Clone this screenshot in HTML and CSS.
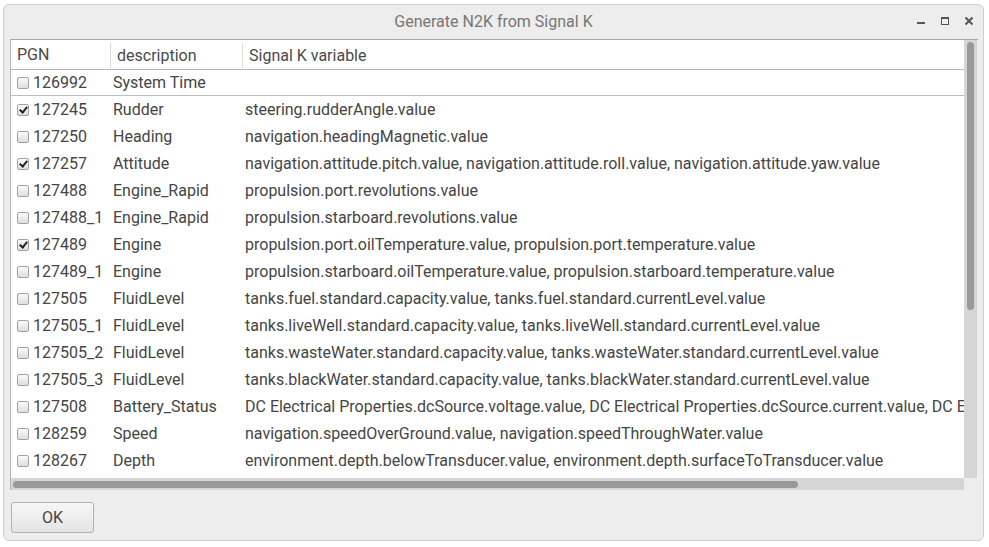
FILE: index.html
```html
<!DOCTYPE html>
<html>
<head>
<meta charset="utf-8">
<link rel="stylesheet" href="styles.css">
</head>
<body>
<div class="window">
  <div class="titlebar">
    <div></div>
    <div class="title">Generate N2K from Signal K</div>
    <div class="controls">
      <svg class="ctl" width="10" height="10" viewBox="0 0 10 10"><rect x="1" y="6" width="8" height="2" fill="#555"/></svg>
      <svg class="ctl" width="10" height="10" viewBox="0 0 10 10"><rect x="1.5" y="1.5" width="7" height="7" fill="none" stroke="#555" stroke-width="1"/><rect x="1" y="1" width="8" height="2" fill="#555"/></svg>
      <svg class="ctl" width="10" height="10" viewBox="0 0 10 10"><path d="M1.5 1.5 L8.5 8.5 M8.5 1.5 L1.5 8.5" stroke="#555" stroke-width="2"/></svg>
    </div>
  </div>
  <div class="content">
    <div class="frame">
      <div class="viewport">
        <div class="hrow">
          <div class="hc c1">PGN</div>
          <div class="hc c2">description</div>
          <div class="hc c3">Signal K variable</div>
        </div>
        <div class="row first">
          <div class="c c1"><span class="cb"></span>126992</div>
          <div class="c c2">System Time</div>
          <div class="c c3"></div>
        </div>
        <div class="row">
          <div class="c c1"><span class="cb on"></span>127245</div>
          <div class="c c2">Rudder</div>
          <div class="c c3">steering.rudderAngle.value</div>
        </div>
        <div class="row">
          <div class="c c1"><span class="cb"></span>127250</div>
          <div class="c c2">Heading</div>
          <div class="c c3">navigation.headingMagnetic.value</div>
        </div>
        <div class="row">
          <div class="c c1"><span class="cb on"></span>127257</div>
          <div class="c c2">Attitude</div>
          <div class="c c3">navigation.attitude.pitch.value, navigation.attitude.roll.value, navigation.attitude.yaw.value</div>
        </div>
        <div class="row">
          <div class="c c1"><span class="cb"></span>127488</div>
          <div class="c c2">Engine_Rapid</div>
          <div class="c c3">propulsion.port.revolutions.value</div>
        </div>
        <div class="row">
          <div class="c c1"><span class="cb"></span>127488_1</div>
          <div class="c c2">Engine_Rapid</div>
          <div class="c c3">propulsion.starboard.revolutions.value</div>
        </div>
        <div class="row">
          <div class="c c1"><span class="cb on"></span>127489</div>
          <div class="c c2">Engine</div>
          <div class="c c3">propulsion.port.oilTemperature.value, propulsion.port.temperature.value</div>
        </div>
        <div class="row">
          <div class="c c1"><span class="cb"></span>127489_1</div>
          <div class="c c2">Engine</div>
          <div class="c c3">propulsion.starboard.oilTemperature.value, propulsion.starboard.temperature.value</div>
        </div>
        <div class="row">
          <div class="c c1"><span class="cb"></span>127505</div>
          <div class="c c2">FluidLevel</div>
          <div class="c c3">tanks.fuel.standard.capacity.value, tanks.fuel.standard.currentLevel.value</div>
        </div>
        <div class="row">
          <div class="c c1"><span class="cb"></span>127505_1</div>
          <div class="c c2">FluidLevel</div>
          <div class="c c3">tanks.liveWell.standard.capacity.value, tanks.liveWell.standard.currentLevel.value</div>
        </div>
        <div class="row">
          <div class="c c1"><span class="cb"></span>127505_2</div>
          <div class="c c2">FluidLevel</div>
          <div class="c c3">tanks.wasteWater.standard.capacity.value, tanks.wasteWater.standard.currentLevel.value</div>
        </div>
        <div class="row">
          <div class="c c1"><span class="cb"></span>127505_3</div>
          <div class="c c2">FluidLevel</div>
          <div class="c c3">tanks.blackWater.standard.capacity.value, tanks.blackWater.standard.currentLevel.value</div>
        </div>
        <div class="row">
          <div class="c c1"><span class="cb"></span>127508</div>
          <div class="c c2">Battery_Status</div>
          <div class="c c3">DC Electrical Properties.dcSource.voltage.value, DC Electrical Properties.dcSource.current.value, DC Electrical Properties.dcSource.temperature.value</div>
        </div>
        <div class="row">
          <div class="c c1"><span class="cb"></span>128259</div>
          <div class="c c2">Speed</div>
          <div class="c c3">navigation.speedOverGround.value, navigation.speedThroughWater.value</div>
        </div>
        <div class="row">
          <div class="c c1"><span class="cb"></span>128267</div>
          <div class="c c2">Depth</div>
          <div class="c c3">environment.depth.belowTransducer.value, environment.depth.surfaceToTransducer.value</div>
        </div>
      </div>
      <div class="vscroll"><div class="vthumb"></div></div>
      <div class="hscroll"><div class="hthumb"></div></div>
      <div class="corner"></div>
    </div>
    <div class="buttons">
      <button class="btn">OK</button>
    </div>
  </div>
</div>
</body>
</html>
```

FILE: styles.css
```css
html, body {
  margin: 0;
  padding: 0;
  background: #ffffff;
}
body {
  font-family: Roboto, "Liberation Sans", sans-serif;
  font-size: 16px;
  color: #454545;
}
.window {
  box-sizing: border-box;
  margin: 4px 0 0 3px;
  width: 981px;
  height: 537px;
  border: 1px solid #cfcfcf;
  border-radius: 6px;
  background: #ededed;
  display: flex;
  flex-direction: column;
}
.titlebar {
  height: 34px;
  display: grid;
  grid-template-columns: 1fr auto 1fr;
  align-items: center;
}
.title {
  color: #777777;
  font-size: 16px;
  padding-bottom: 2px;
}
.controls {
  display: flex;
  justify-content: flex-end;
  gap: 14px;
  padding-right: 9px;
  padding-bottom: 2px;
}
.ctl {
  display: block;
}
.content {
  padding: 0 5px 0 6px;
  display: flex;
  flex-direction: column;
}
.frame {
  display: grid;
  grid-template-columns: 953px 13px;
  grid-template-rows: 438px 12px;
  border-left: 1px solid #b4b4b4;
  border-top: 1px solid #a8a8a8;
}
.viewport {
  background: #ffffff;
  overflow: hidden;
}
.hrow {
  display: flex;
  height: 29px;
  border-bottom: 1px solid #b8b8b8;
  align-items: stretch;
}
.hc {
  display: flex;
  align-items: center;
  box-sizing: border-box;
  white-space: nowrap;
  color: #4a4a4a;
}
.hc.c1 { width: 99px; padding-left: 6px; }
.hc.c2 { width: 132px; padding-left: 6px; border-left: 1px solid #dcdcdc; }
.hc.c3 { padding-left: 6px; border-left: 1px solid #dcdcdc; }
.hrow .hc.c2, .hrow .hc.c3 { margin-top: 3px; margin-bottom: 1px; }
.row {
  display: flex;
  height: 27px;
  align-items: center;
  white-space: nowrap;
}
.row.first {
  height: 25px;
  border-bottom: 1px solid #bdbdbd;
}
.c {
  box-sizing: border-box;
  flex: none;
}
.c.c1 { width: 99px; padding-left: 6px; display: flex; align-items: center; }
.c.c2 { width: 132px; padding-left: 3px; }
.c.c3 { padding-left: 3px; }
.cb {
  box-sizing: border-box;
  width: 12px;
  height: 12px;
  border: 1px solid #a2a2a2;
  border-radius: 2px;
  background: linear-gradient(#fbfbfb, #dedede);
  margin-right: 4px;
  position: relative;
  flex: none;
}
.cb.on::after {
  content: "";
  position: absolute;
  left: 3px;
  top: 0px;
  width: 3px;
  height: 6px;
  border-right: 2px solid #222;
  border-bottom: 2px solid #222;
  transform: rotate(40deg);
}
.vscroll {
  background: #d5d5d5;
}
.vthumb {
  margin: 2px 0 0 3px;
  width: 7px;
  height: 268px;
  background: #999999;
  border-radius: 4px;
}
.hscroll {
  background: #d5d5d5;
  display: flex;
  align-items: center;
}
.hthumb {
  margin-left: 2px;
  width: 785px;
  height: 7px;
  background: #999999;
  border-radius: 4px;
}
.corner {
  background: #ededed;
}
.buttons {
  padding-top: 12px;
  display: flex;
}
.btn {
  box-sizing: border-box;
  width: 83px;
  height: 31px;
  margin-left: 1px;
  border: 1px solid #b2b2b2;
  border-radius: 3px;
  background: linear-gradient(#f7f7f7, #e4e4e4);
  font-family: Roboto, "Liberation Sans", sans-serif;
  font-size: 16px;
  color: #444;
  padding: 0;
}
```
